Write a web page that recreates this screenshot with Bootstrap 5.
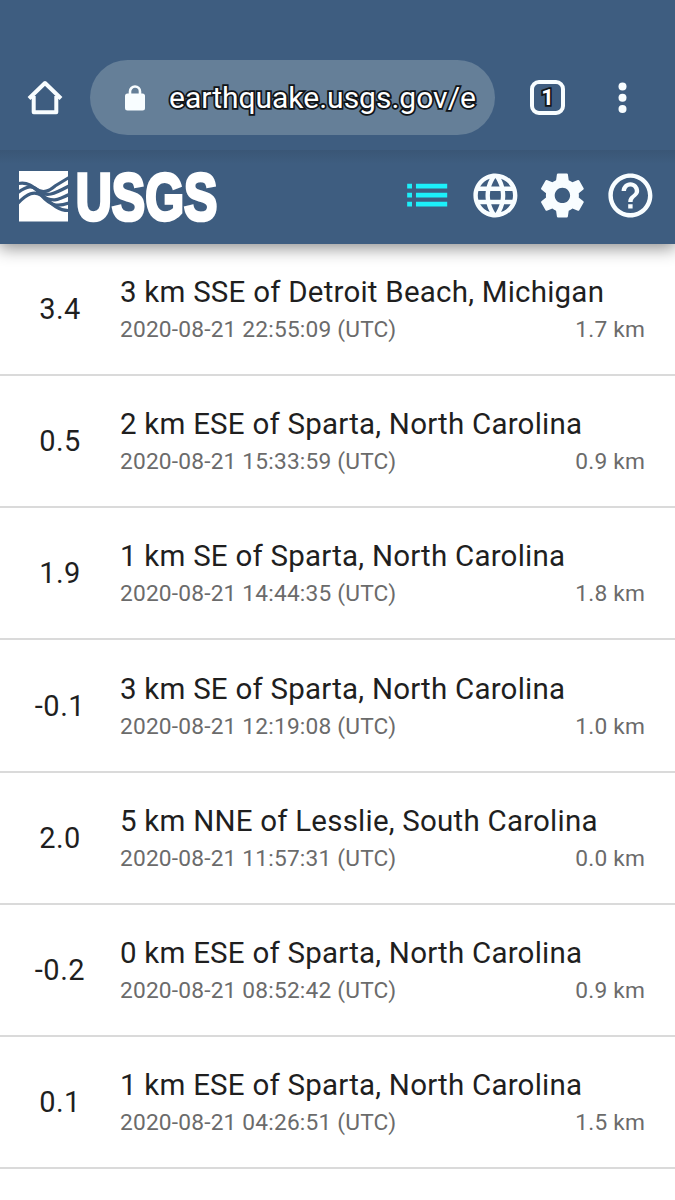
<!DOCTYPE html>
<html lang="en">
<head>
<meta charset="utf-8">
<meta name="viewport" content="width=device-width, initial-scale=1">
<title>Latest Earthquakes</title>
<link href="https://cdn.jsdelivr.net/npm/bootstrap@5.3.0/dist/css/bootstrap.min.css" rel="stylesheet">
<style>
body{font-family:Roboto,sans-serif;color:#1f1f1f;background:#fff;overflow:hidden;height:1200px}
.browser-bar{height:150px;padding:60px 0 15px;background:#3e5d80;position:relative;z-index:2}
.home{margin-left:27px;width:36px;height:36px}
.address{width:405px;height:75px;margin-left:27px;padding-left:34px;background:#657f98}
.outlined{color:#fff;paint-order:stroke fill;-webkit-text-stroke:3.6px #101418}
.url{width:312px;margin-left:21px;font-size:30px;line-height:40px;padding:1px 0 0 2px}
.tabs{width:35px;height:35px;margin-left:35px;border:4px solid #f8fdff;border-radius:9px;font-size:22px;line-height:1;font-weight:700}
.more{margin-left:52px}
.site-bar{height:94px;padding:0 18px 4px 18px;background:linear-gradient(#3a5676,#3e5d80 14px);box-shadow:0 3px 16px 1px rgba(0,0,0,.45);position:relative;z-index:1}
.logo{overflow:visible;margin-top:4px}
.tools{gap:15px}
.quake{height:132.17px;border-bottom:2px solid #dadada;padding:0 30px 1px 0}
.mag{width:120px;font-size:29px;letter-spacing:.5px;line-height:40px;padding-top:1px}
.place{font-size:29.5px;line-height:40px;letter-spacing:.22px}
.meta{font-size:22.7px;line-height:30px;letter-spacing:.2px;color:#6b6b6b;margin-top:3px}
</style>
<script src="https://cdn.jsdelivr.net/npm/bootstrap@5.3.0/dist/js/bootstrap.bundle.min.js"></script>
</head>
<body>
<header class="browser-bar d-flex align-items-center">
  <svg class="home flex-shrink-0" viewBox="0 0 36 36" fill="none" stroke="#f8fdff" stroke-width="4" stroke-linejoin="round"><path d="M2 18.500 18 3 34 18.500M6.700 16V32.300H29.300V16"/></svg>
  <div class="address rounded-pill d-flex align-items-center flex-shrink-0">
    <svg class="flex-shrink-0" width="22" height="26" viewBox="0 0 22 26"><path d="M6 10V6.500a5 5 0 0 1 10 0V10" fill="none" stroke="#f8fdff" stroke-width="2.600"/><rect x="1" y="8.500" width="20" height="17" rx="2.500" fill="#f8fdff"/></svg>
    <div class="url outlined text-nowrap">earthquake.usgs.gov/e</div>
  </div>
  <div class="tabs outlined d-flex align-items-center justify-content-center flex-shrink-0">1</div>
  <svg class="more flex-shrink-0" width="12" height="32" viewBox="0 0 12 32" fill="#f8fdff"><circle cx="5.500" cy="4.500" r="4"/><circle cx="5.500" cy="15.800" r="4"/><circle cx="5.500" cy="27" r="4"/></svg>
</header>
<nav class="site-bar d-flex align-items-center justify-content-between">
  <svg class="logo" width="202" height="54" viewBox="0 0 202 54">
    <path fill="#fff" d="M1 1H50V51.500H1z"/>
    <g fill="none" stroke="#3e5d80" stroke-width="3.200">
      <path d="M0 13.500C12 11 17 19 24 25S39 41 51 40.500"/>
      <path d="M16 18C26 25 32 20 37 16L51 7.500"/>
      <path d="M0 22.500C10 15 15 16 20 20C28 28 36 24 51 16"/>
      <path d="M0 33C10 23 16 21 23 25C34 33 40 30 51 24.500"/>
      <path d="M23 25C34 38 42 36 51 33"/>
    </g>
    <text x="57.800" y="50" font-family="Liberation Sans, sans-serif" font-weight="700" font-size="67.500" textLength="141.500" lengthAdjust="spacingAndGlyphs" fill="#fff" stroke="#fff" stroke-width="3.600">USGS</text>
  </svg>
  <div class="tools d-flex align-items-center">
    <svg width="52.800" height="52.800" viewBox="0 0 24 24" fill="#1cf0fa"><path d="M2.800 6.700h2.200v2.200H2.800zM6.800 6.700h14.200v2.200H6.800zM2.800 10.800h2.200v2.200H2.800zM6.800 10.800h14.200v2.200H6.800zM2.800 14.900h2.200v2.200H2.800zM6.800 14.900h14.200v2.200H6.800z"/></svg>
    <svg width="52.800" height="52.800" viewBox="0 0 24 24" fill="#f8fdff"><path d="M11.990 2C6.470 2 2 6.480 2 12s4.470 10 9.990 10C17.520 22 22 17.520 22 12S17.520 2 11.990 2zm6.930 6h-2.950c-.32-1.250-.78-2.450-1.380-3.560 1.840.63 3.370 1.910 4.330 3.560zM12 4.040c.83 1.200 1.480 2.530 1.910 3.960h-3.820c.43-1.430 1.080-2.760 1.910-3.960zM4.260 14C4.100 13.360 4 12.690 4 12s.1-1.360.26-2h3.380c-.08.66-.14 1.320-.14 2s.06 1.340.14 2H4.260zm.82 2h2.950c.32 1.250.78 2.450 1.380 3.560-1.840-.63-3.370-1.900-4.330-3.560zm2.950-8H5.080c.96-1.660 2.490-2.930 4.330-3.560C8.810 5.550 8.350 6.750 8.030 8zM12 19.960c-.83-1.200-1.480-2.530-1.910-3.960h3.820c-.43 1.430-1.080 2.760-1.910 3.960zM14.340 14H9.660c-.09-.66-.16-1.320-.16-2s.07-1.350.16-2h4.680c.09.65.16 1.320.16 2s-.07 1.340-.16 2zm.25 5.560c.6-1.110 1.060-2.310 1.380-3.560h2.950c-.96 1.650-2.490 2.930-4.330 3.560zM16.360 14c.08-.66.14-1.320.14-2s-.06-1.340-.14-2h3.380c.16.640.26 1.310.26 2s-.1 1.360-.26 2h-3.380z"/></svg>
    <svg width="52.800" height="52.800" viewBox="0 0 24 24" fill="#f8fdff"><path d="M19.430 12.980c.04-.32.07-.64.07-.98s-.03-.66-.07-.98l2.110-1.650c.19-.15.24-.42.12-.64l-2-3.460c-.12-.22-.39-.3-.61-.22l-2.490 1c-.52-.4-1.080-.73-1.690-.98l-.38-2.650C14.460 2.180 14.250 2 14 2h-4c-.25 0-.46.18-.49.42l-.38 2.650c-.61.25-1.170.59-1.690.98l-2.490-1c-.23-.09-.49 0-.61.22l-2 3.460c-.13.22-.07.49.12.64l2.110 1.650c-.04.32-.07.65-.07.98s.03.66.07.98l-2.110 1.650c-.19.15-.24.42-.12.64l2 3.460c.12.22.39.3.61.22l2.490-1c.52.4 1.080.73 1.690.98l.38 2.650c.03.24.24.42.49.42h4c.25 0 .46-.18.49-.42l.38-2.650c.61-.25 1.170-.59 1.690-.98l2.490 1c.23.090.49 0 .61-.22l2-3.460c.12-.22.070-.49-.12-.64l-2.110-1.650zM12 15.500c-1.930 0-3.500-1.570-3.500-3.500s1.570-3.500 3.500-3.500 3.500 1.570 3.500 3.500-1.570 3.500-3.500 3.500z"/></svg>
    <svg width="52.800" height="52.800" viewBox="0 0 24 24" fill="#f8fdff"><path d="M11 18h2v-2h-2v2zm1-16C6.480 2 2 6.480 2 12s4.480 10 10 10 10-4.480 10-10S17.520 2 12 2zm0 18c-4.410 0-8-3.590-8-8s3.590-8 8-8 8 3.590 8 8-3.590 8-8 8zm0-14c-2.210 0-4 1.790-4 4h2c0-1.100.9-2 2-2s2 .9 2 2c0 2-3 1.750-3 5h2c0-2.250 3-2.500 3-5 0-2.210-1.790-4-4-4z"/></svg>
  </div>
</nav>
<main>
  <div class="quake d-flex align-items-center"><div class="mag text-center flex-shrink-0">3.4</div><div class="flex-grow-1 text-nowrap"><div class="place">3 km SSE of Detroit Beach, Michigan</div><div class="meta d-flex justify-content-between"><span>2020-08-21 22:55:09 (UTC)</span><span>1.7 km</span></div></div></div>
  <div class="quake d-flex align-items-center"><div class="mag text-center flex-shrink-0">0.5</div><div class="flex-grow-1 text-nowrap"><div class="place">2 km ESE of Sparta, North Carolina</div><div class="meta d-flex justify-content-between"><span>2020-08-21 15:33:59 (UTC)</span><span>0.9 km</span></div></div></div>
  <div class="quake d-flex align-items-center"><div class="mag text-center flex-shrink-0">1.9</div><div class="flex-grow-1 text-nowrap"><div class="place">1 km SE of Sparta, North Carolina</div><div class="meta d-flex justify-content-between"><span>2020-08-21 14:44:35 (UTC)</span><span>1.8 km</span></div></div></div>
  <div class="quake d-flex align-items-center"><div class="mag text-center flex-shrink-0">-0.1</div><div class="flex-grow-1 text-nowrap"><div class="place">3 km SE of Sparta, North Carolina</div><div class="meta d-flex justify-content-between"><span>2020-08-21 12:19:08 (UTC)</span><span>1.0 km</span></div></div></div>
  <div class="quake d-flex align-items-center"><div class="mag text-center flex-shrink-0">2.0</div><div class="flex-grow-1 text-nowrap"><div class="place">5 km NNE of Lesslie, South Carolina</div><div class="meta d-flex justify-content-between"><span>2020-08-21 11:57:31 (UTC)</span><span>0.0 km</span></div></div></div>
  <div class="quake d-flex align-items-center"><div class="mag text-center flex-shrink-0">-0.2</div><div class="flex-grow-1 text-nowrap"><div class="place">0 km ESE of Sparta, North Carolina</div><div class="meta d-flex justify-content-between"><span>2020-08-21 08:52:42 (UTC)</span><span>0.9 km</span></div></div></div>
  <div class="quake d-flex align-items-center"><div class="mag text-center flex-shrink-0">0.1</div><div class="flex-grow-1 text-nowrap"><div class="place">1 km ESE of Sparta, North Carolina</div><div class="meta d-flex justify-content-between"><span>2020-08-21 04:26:51 (UTC)</span><span>1.5 km</span></div></div></div>
</main>
</body>
</html>
